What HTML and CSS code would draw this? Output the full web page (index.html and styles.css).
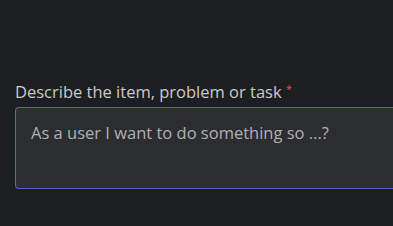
FILE: index.html
```html
<!DOCTYPE html>
<html lang="en">
<head>
  <meta charset="UTF-8">
  <title>Describe the item</title>
  <link rel="stylesheet" href="styles.css">
</head>
<body>
  <div class="field">
    <label class="field-label" for="desc">Describe the item, problem or task <span class="req">*</span></label>
    <textarea id="desc" class="field-input" placeholder="As a user I want to do something so ...?"></textarea>
  </div>
</body>
</html>
```

FILE: styles.css
```css
html, body {
  margin: 0;
  background: #1d1e20;
}
body {
  font-family: "Open Sans", Arial, sans-serif;
  width: 393px;
  height: 226px;
  overflow: hidden;
}
.field {
  padding: 81px 0 0 15px;
}
.field-label {
  display: block;
  font-size: 16.5px;
  line-height: 22px;
  color: #c9cacd;
  margin-bottom: 4px;
  white-space: nowrap;
}
.req {
  color: #d9566a;
  font-size: 11px;
  vertical-align: top;
  line-height: 16px;
}
.field-input {
  display: block;
  box-sizing: border-box;
  width: 100%;
  height: 82px;
  background: #2c2d31;
  border: 1px solid #5a63c8;
  border-right: none;
  border-radius: 4px 0 0 4px;
  padding: 13px 15px 11px;
  font-family: inherit;
  font-size: 16.5px;
  color: #ddd;
  resize: none;
  outline: none;
}
.field-input::placeholder {
  color: #b0b1b4;
}
```
